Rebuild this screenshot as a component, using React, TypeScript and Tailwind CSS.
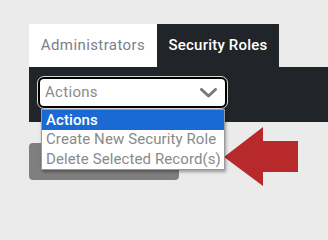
import React from 'react';

const font = { fontFamily: 'Roboto, "Noto Sans", sans-serif' };

function Chevron() {
  return (
    <svg width="17" height="10" viewBox="0 0 17 10" fill="none" aria-hidden="true">
      <path d="M1.5 1.5l7 6.5 7-6.5" stroke="#7a7a7a" strokeWidth="3" strokeLinecap="round" strokeLinejoin="round" />
    </svg>
  );
}

function RedArrow() {
  return (
    <svg
      width="74"
      height="59"
      viewBox="0 0 74 59"
      className="absolute left-[224px] top-[127px]"
      aria-hidden="true"
    >
      <polygon points="0,30 39,0 39,14 74,14 74,45 39,45 39,59" fill="#b8292b" />
    </svg>
  );
}

const options = ['Actions', 'Create New Security Role', 'Delete Selected Record(s)'];

export default function App() {
  return (
    <div
      className="relative h-[208px] min-h-screen w-[328px] overflow-hidden bg-[#ebebeb] pl-[29px] pt-[24px]"
      style={font}
    >
      <div className="flex h-[43px]">
        <div className="flex w-[128px] items-center justify-center whitespace-nowrap bg-white text-[15px] tracking-[0.4px] text-[#7b7f86]">
          Administrators
        </div>
        <div className="flex w-[122px] items-center justify-center whitespace-nowrap bg-[#212428] text-[15px] font-medium tracking-[0.2px] text-white">
          Security Roles
        </div>
      </div>

      <div className="h-[55px] bg-[#212428] pl-[9px] pt-[10px]">
        <div className="relative w-[189px]">
          <div className="flex h-[31px] items-center justify-between rounded-[6px] border-2 border-black bg-white pl-[5px] pr-[8px] outline outline-1 outline-[#d8d8d8]">
            <span className="text-[15px] tracking-[0.3px] text-[#8a8a8a]">Actions</span>
            <Chevron />
          </div>
          <ul className="absolute left-[3px] top-[32px] z-10 w-[184px] border border-[#9a9a9a] bg-white shadow-[1px_2px_3px_rgba(0,0,0,0.35)]">
            {options.map((opt, i) => (
              <li
                key={opt}
                className={`flex h-[19.5px] items-center whitespace-nowrap px-[4px] text-[15px] tracking-[0.1px] ${
                  i === 0 ? 'bg-[#1b6ad4] font-medium text-white' : 'text-[#8a8a8a]'
                }`}
              >
                {opt}
              </li>
            ))}
          </ul>
        </div>
      </div>

      <button
        type="button"
        aria-label="Apply"
        className="mt-[21px] block h-[37px] w-[150px] rounded-[4px] bg-[#7f7f7f]"
      />

      <RedArrow />
    </div>
  );
}
